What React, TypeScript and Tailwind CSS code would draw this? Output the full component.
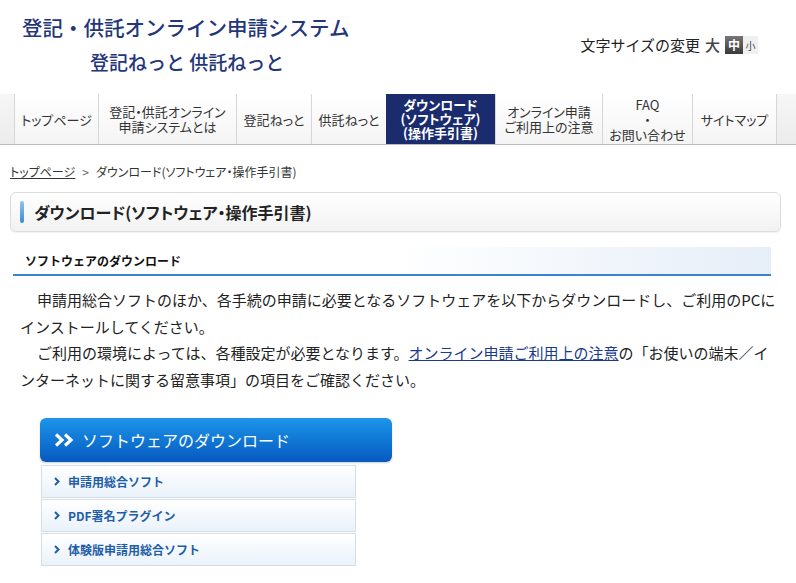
const font = "font-['Noto_Sans_CJK_JP','Noto_Sans',sans-serif]"
const palt = "[font-feature-settings:'palt']"

const navItems = [
  { label: ['トップページ'], w: 'w-[84px]' },
  { label: ['登記・供託オンライン', '申請システムとは'], w: 'w-[138px]' },
  { label: ['登記ねっと'], w: 'w-[75px]' },
  { label: ['供託ねっと'], w: 'w-[75px]' },
  { label: ['ダウンロード', '(ソフトウェア)', '(操作手引書)'], w: 'w-[109px]', active: true },
  { label: ['オンライン申請', 'ご利用上の注意'], w: 'w-[107px]' },
  { label: ['FAQ', '・', 'お問い合わせ'], w: 'w-[90px]' },
  { label: ['サイトマップ'], w: 'w-[84px]' },
]

const downloads = ['申請用総合ソフト', 'PDF署名プラグイン', '体験版申請用総合ソフト']

function Header() {
  return (
    <header className="flex h-[94px] justify-between">
      <div className="pl-[22px] pt-[13px] text-[#24367a]">
        <div className="text-[20.5px] leading-[28px] font-medium">登記・供託オンライン申請システム</div>
        <div className="pl-[68px] pt-[8px] text-[19px] leading-[26px] font-medium">登記ねっと 供託ねっと</div>
      </div>
      <div className="flex h-[84px] items-center gap-[5px] pr-[38px] pt-[6px]">
        <span className="text-[15px] text-[#222]">文字サイズの変更</span>
        <span className="text-[15px] font-medium text-[#444]">大</span>
        <span className="flex h-[18px] w-[18px] items-center justify-center bg-gradient-to-b from-[#777] to-[#3a3a3a] text-[12px] font-bold text-white">中</span>
        <span className="-ml-[5px] flex h-[18px] w-[15px] items-center justify-center bg-[#f0f0f0] text-[10px] text-[#444]">小</span>
      </div>
    </header>
  )
}

function Nav() {
  return (
    <nav className={`${palt} flex h-[51px] border-b border-[#bbb] bg-gradient-to-b from-[#f6f6f6] to-[#ececec]`}>
      <div className="w-[14px]" />
      {navItems.map((item, i) => (
        <div
          key={i}
          className={
            item.active
              ? `${item.w} flex flex-col items-center justify-center bg-[#1b2c6e] text-[13px] leading-[14px] font-bold text-white`
              : `${item.w} flex flex-col items-center justify-center border-l border-[#d6d6d6] bg-gradient-to-b from-white to-[#f4f4f4] text-[13px] leading-[15px] text-[#333]`
          }
        >
          {item.label.map((l, j) => (
            <span key={j}>{l}</span>
          ))}
        </div>
      ))}
      <div className="flex-1 border-l border-[#d6d6d6]" />
    </nav>
  )
}

export default function App() {
  return (
    <div className={`${font} h-[583px] w-[796px] overflow-hidden bg-white text-[#222]`}>
      <Header />
      <Nav />

      <div className={`${palt} px-[10px] pt-[19px] text-[12px] leading-[16px] text-[#333]`}>
        <a className="text-[#333] underline">トップページ</a>
        <span className="mx-[7px] text-[#666]">&gt;</span>
        <span>ダウンロード(ソフトウェア・操作手引書)</span>
      </div>

      <div className="mx-[10px] mt-[12px] flex h-[40px] w-[771px] items-center rounded-[6px] border border-[#dcdcdc] bg-gradient-to-b from-white to-[#f2f2f2] shadow-[0_1px_1px_rgba(0,0,0,0.06)]">
        <div className="ml-[9px] h-[22px] w-[4px] rounded-[2px] bg-gradient-to-b from-[#8fc3ee] to-[#3c8ad6]" />
        <h1 className={`${palt} ml-[10px] text-[16px] font-bold text-[#222]`}>ダウンロード(ソフトウェア・操作手引書)</h1>
      </div>

      <div className="mx-[13px] mt-[15px] flex h-[29px] w-[758px] items-center border-b-2 border-[#3b82d0] bg-gradient-to-r from-white via-white to-[#e6eef8]">
        <h2 className="ml-[12px] text-[12px] font-bold text-[#111]">ソフトウェアのダウンロード</h2>
      </div>

      <div className="pl-[20px] pr-[18px] pt-[11px] text-[15px] leading-[26.5px] text-[#222]">
        <p className="indent-[17px]">申請用総合ソフトのほか、各手続の申請に必要となるソフトウェアを以下からダウンロードし、ご利用のPCにインストールしてください。</p>
        <p className="indent-[17px]">
          ご利用の環境によっては、各種設定が必要となります。
          <a className="text-[#1a3a8c] underline">オンライン申請ご利用上の注意</a>
          の「お使いの端末／インターネットに関する留意事項」の項目をご確認ください。
        </p>
      </div>

      <div className="ml-[40px] mt-[25px]">
        <div className="flex h-[44px] w-[352px] items-center rounded-[6px] bg-gradient-to-b from-[#1e95ea] to-[#0859bf] shadow-[0_1px_2px_rgba(0,0,0,0.2)]">
          <svg className="ml-[14px]" width="21" height="14" viewBox="0 0 21 14">
            <path d="M2 1.5 L8 7 L2 12.5" fill="none" stroke="white" strokeWidth="3.2" />
            <path d="M11 1.5 L17 7 L11 12.5" fill="none" stroke="white" strokeWidth="3.2" />
          </svg>
          <span className="ml-[7px] text-[16px] text-white">ソフトウェアのダウンロード</span>
        </div>
        <ul className="ml-[1px] mt-[3px] flex w-[315px] flex-col gap-[1px]">
          {downloads.map((d) => (
            <li
              key={d}
              className="flex h-[33px] items-center border border-[#d3dee9] bg-gradient-to-b from-white to-[#eaf2fa] text-[12px] font-bold text-[#1f5ea8]"
            >
              <svg className="ml-[12px] mr-[8px]" width="6" height="9" viewBox="0 0 6 9">
                <path d="M1 1 L4.5 4.5 L1 8" fill="none" stroke="#1f5ea8" strokeWidth="2" />
              </svg>
              {d}
            </li>
          ))}
        </ul>
      </div>
    </div>
  )
}
